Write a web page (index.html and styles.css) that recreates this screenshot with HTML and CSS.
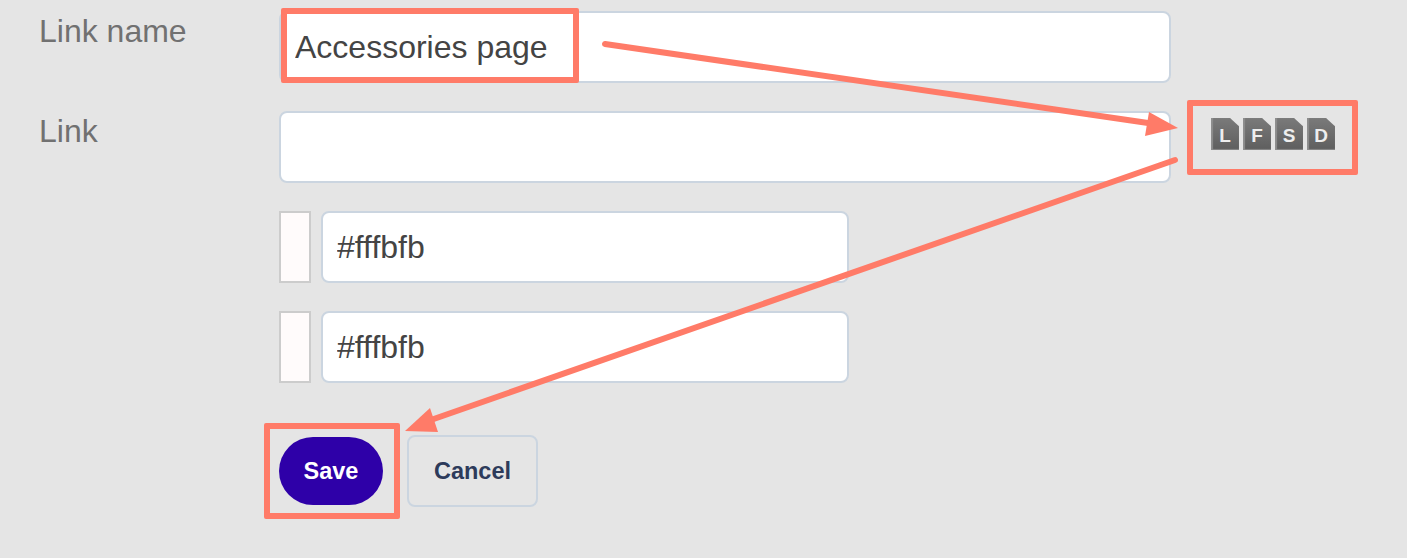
FILE: index.html
```html
<!DOCTYPE html>
<html lang="en">
<head>
  <meta charset="UTF-8">
  <meta name="viewport" content="width=device-width, initial-scale=1.0">
  <title>Edit Link</title>
  <link rel="stylesheet" href="styles.css">
</head>
<body>
  <form class="link-form">
    <div class="form-row">
      <label class="form-label" for="linkName">Link name</label>
      <input class="form-input" id="linkName" type="text" value="Accessories page">
    </div>
    <div class="form-row">
      <label class="form-label" for="linkUrl">Link</label>
      <input class="form-input" id="linkUrl" type="text">
    </div>
    <div class="form-row">
      <span class="form-label"></span>
      <span class="swatch"></span>
      <input class="form-input color-input" type="text" value="#fffbfb">
    </div>
    <div class="form-row">
      <span class="form-label"></span>
      <span class="swatch"></span>
      <input class="form-input color-input" type="text" value="#fffbfb">
    </div>
    <div class="form-actions">
      <button class="btn-save" type="button">Save</button>
      <button class="btn-cancel" type="button">Cancel</button>
    </div>
  </form>

  <div class="doc-icons">
    <span class="doc-icon">L</span>
    <span class="doc-icon">F</span>
    <span class="doc-icon">S</span>
    <span class="doc-icon">D</span>
  </div>

  <!-- Annotations drawn over the screenshot -->
  <div class="mark mark-name"></div>
  <div class="mark mark-icons"></div>
  <div class="mark mark-save"></div>
  <svg class="arrows" width="1407" height="558" viewBox="0 0 1407 558">
    <line x1="605" y1="44" x2="1155" y2="124" stroke="#ff7b68" stroke-width="6" stroke-linecap="round"/>
    <polygon points="1178,128 1149,112 1145,136" fill="#ff7b68"/>
    <line x1="1175" y1="160" x2="428" y2="421" stroke="#ff7b68" stroke-width="6" stroke-linecap="round"/>
    <polygon points="405,431 430,408 438,432" fill="#ff7b68"/>
  </svg>
</body>
</html>
```
FILE: styles.css
```css
body {
  margin: 0;
  height: 558px;
  overflow: hidden;
  position: relative;
  background-color: #e5e5e5;
  font-family: "Liberation Sans", Arial, sans-serif;
}

.link-form {
  display: flex;
  flex-direction: column;
  gap: 28px;
  padding: 11px 0 0 39px;
}

.form-row {
  display: flex;
  gap: 10px;
  height: 72px;
}

.form-label {
  width: 230px;
  flex-shrink: 0;
  font-size: 32px;
  line-height: 40px;
  color: #717171;
}

.form-input {
  box-sizing: border-box;
  width: 892px;
  height: 72px;
  padding: 0 14px;
  background-color: #fff;
  border: 2px solid #cbd5e0;
  border-radius: 8px;
  font-family: "Liberation Sans", Arial, sans-serif;
  font-size: 32px;
  color: #444;
}

.color-input {
  width: 528px;
}

.swatch {
  box-sizing: border-box;
  width: 32px;
  height: 72px;
  background-color: #fffbfb;
  border: 2px solid #ccc;
}

.form-actions {
  display: flex;
  align-items: center;
  gap: 24px;
  height: 72px;
  margin-top: 24px;
  padding-left: 240px;
}

.btn-save {
  width: 104px;
  height: 68px;
  background-color: #2e00a8;
  color: #fff;
  border: none;
  border-radius: 34px;
  font-family: "Liberation Sans", Arial, sans-serif;
  font-size: 23.5px;
  font-weight: bold;
}

.btn-cancel {
  box-sizing: border-box;
  width: 131px;
  height: 72px;
  background-color: transparent;
  color: #2d3b5b;
  border: 2px solid #cbd5e0;
  border-radius: 8px;
  font-family: "Liberation Sans", Arial, sans-serif;
  font-size: 23.5px;
  font-weight: bold;
}

.doc-icons {
  position: absolute;
  top: 118px;
  left: 1211px;
  display: flex;
  gap: 4px;
}

.doc-icon {
  width: 28px;
  height: 32px;
  background: linear-gradient(180deg, #7a7a7a, #5e5e5e);
  box-shadow: inset 2px 0 1px #8e8e8e, inset 0 -1px 1px #888;
  clip-path: polygon(0 0, 68% 0, 100% 26%, 100% 100%, 0 100%);
  color: #eee;
  font-size: 19px;
  font-weight: bold;
  line-height: 35px;
  text-align: center;
}

.mark {
  position: absolute;
  box-sizing: border-box;
  border: 6px solid #ff7b68;
  border-radius: 2px;
}

.mark-name {
  top: 8px;
  left: 281px;
  width: 298px;
  height: 75px;
}

.mark-icons {
  top: 100px;
  left: 1187px;
  width: 171px;
  height: 75px;
}

.mark-save {
  top: 423px;
  left: 264px;
  width: 136px;
  height: 96px;
}

.arrows {
  position: absolute;
  top: 0;
  left: 0;
}
```
